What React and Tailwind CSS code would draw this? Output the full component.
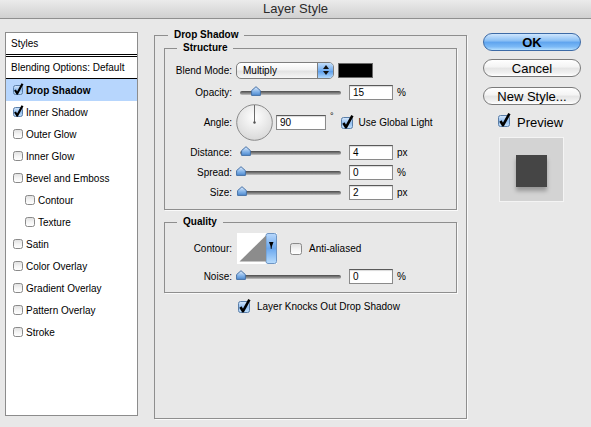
import React from "react";

// shared svg gradients for the aqua widgets
function Defs() {
  return (
    <svg width="0" height="0" className="absolute">
      <defs>
        <linearGradient id="cbOff" x1="0" y1="0" x2="0" y2="1">
          <stop offset="0" stopColor="#dedede" />
          <stop offset="0.5" stopColor="#f4f4f4" />
          <stop offset="1" stopColor="#ffffff" />
        </linearGradient>
        <linearGradient id="cbOn" x1="0" y1="0" x2="0" y2="1">
          <stop offset="0" stopColor="#d8e9fc" />
          <stop offset="0.5" stopColor="#93bff0" />
          <stop offset="1" stopColor="#c4e2fd" />
        </linearGradient>
        <linearGradient id="thumb" x1="0" y1="0" x2="0" y2="1">
          <stop offset="0" stopColor="#e3efff" />
          <stop offset="0.6" stopColor="#7fb0e6" />
          <stop offset="1" stopColor="#4f8ad0" />
        </linearGradient>
        <radialGradient id="dial" cx="0.5" cy="0.35" r="0.7">
          <stop offset="0" stopColor="#ffffff" />
          <stop offset="1" stopColor="#d6d6d6" />
        </radialGradient>
        <linearGradient id="strip" x1="0" y1="0" x2="0" y2="1">
          <stop offset="0" stopColor="#b9d8fb" />
          <stop offset="0.5" stopColor="#6aa7ee" />
          <stop offset="1" stopColor="#b8dcfd" />
        </linearGradient>
      </defs>
    </svg>
  );
}

function Check({ checked, size = 12 }) {
  const s = size;
  return (
    <svg width={s} height={s} className="shrink-0 overflow-visible">
      <rect
        x="0.5"
        y="0.5"
        width={s - 1}
        height={s - 1}
        rx="2"
        fill={checked ? "url(#cbOn)" : "url(#cbOff)"}
        stroke={checked ? "#5a7ea8" : "#8a8a8a"}
      />
      {checked && (
        <path
          d={`M${s * 0.2} ${s * 0.5} L${s * 0.42} ${s * 0.85} L${s * 0.95} ${-s * 0.12}`}
          stroke="#000"
          strokeWidth={s > 11 ? 2.6 : 2.2}
          fill="none"
          strokeLinejoin="round"
        />
      )}
    </svg>
  );
}

function Slider({ thumb }) {
  return (
    <div className="relative w-[105px] h-[11px] flex items-center shrink-0">
      <div className="ml-[4px] w-[101px] h-[4px] rounded-full bg-[linear-gradient(to_bottom,#4a4a4a,#8a8a8a_60%,#c4c4c4)]" />
      <svg width="10" height="10" className={`absolute top-[-1px] ${thumb}`}>
        <path d="M5 0.7 L9.4 4.6 L9.4 9.4 L0.6 9.4 L0.6 4.6 Z" fill="url(#thumb)" stroke="#4671a6" strokeLinejoin="round" />
      </svg>
    </div>
  );
}

function Field({ value, w = "w-[44px]" }) {
  return (
    <div className={`${w} h-[15px] shrink-0 bg-white border border-[#8a8a8a] border-t-[#5a5a5a] shadow-[inset_0_1px_1px_rgba(0,0,0,0.15)] pl-[3px] text-[10px] leading-[13px]`}>
      {value}
    </div>
  );
}

function Label({ children }) {
  return <div className="w-[67px] shrink-0 text-right mr-[4px]">{children}</div>;
}

function Legend({ children, className }) {
  return (
    <div className={`absolute top-[-7px] px-[6px] bg-[#e8e8e8] font-bold leading-[12px] ${className}`}>
      {children}
    </div>
  );
}

function SliderRow({ label, thumb, value, unit, className = "" }) {
  return (
    <div className={`flex items-center h-[15px] ${className}`}>
      <Label>{label}</Label>
      <Slider thumb={thumb} />
      <div className="ml-[8px]">
        <Field value={value} />
      </div>
      <div className="ml-[4px]">{unit}</div>
    </div>
  );
}

function AquaButton({ children, blue, className = "" }) {
  return (
    <div
      className={`w-[98px] h-[18px] rounded-full flex items-center justify-center text-[13px] leading-none ${
        blue
          ? "font-bold border border-[#3c6aa6] bg-[linear-gradient(to_bottom,#cfe6fd,#86bdf4_45%,#5ea3ee_50%,#7cbaf6_80%,#b6e0ff)]"
          : "border border-[#7b7b7b] bg-[linear-gradient(to_bottom,#ffffff,#f3f3f3_45%,#e4e4e4_50%,#f0f0f0_80%,#ffffff)]"
      } ${className}`}
    >
      {children}
    </div>
  );
}

const items = [
  { label: "Drop Shadow", checked: true, active: true },
  { label: "Inner Shadow", checked: true },
  { label: "Outer Glow" },
  { label: "Inner Glow" },
  { label: "Bevel and Emboss" },
  { label: "Contour", indent: true },
  { label: "Texture", indent: true },
  { label: "Satin" },
  { label: "Color Overlay" },
  { label: "Gradient Overlay" },
  { label: "Pattern Overlay" },
  { label: "Stroke" },
];

export default function App() {
  return (
    <div className="w-[591px] h-[427px] overflow-hidden bg-[#e8e8e8] text-[10px] text-black font-['Liberation_Sans',Arial,sans-serif]">
      <Defs />
      {/* title bar */}
      <div className="h-[19px] border-b border-[#8f8f8f] bg-[linear-gradient(to_bottom,#ebebeb,#d0d0d0)] flex items-center justify-center text-[13px] text-[#2b2b2b]">
        Layer Style
      </div>

      <div className="flex items-start pl-[5px] pt-[13px]">
        {/* styles list */}
        <div className="w-[133px] h-[384px] shrink-0 bg-white border border-[#8c8c8c]">
          <div className="h-[21px] flex items-center pl-[5px]">Styles</div>
          <div className="h-[1px] bg-black" />
          <div className="h-[1px]" />
          <div className="h-[1px] bg-black" />
          <div className="h-[21px] flex items-center pl-[5px]">Blending Options: Default</div>
          <div className="h-[1px] bg-black" />
          {items.map((it) => (
            <div
              key={it.label}
              className={`h-[22px] flex items-center gap-[3px] ${it.indent ? "pl-[19px]" : "pl-[7px]"} ${
                it.active ? "bg-[#b7d6fd] font-bold" : ""
              }`}
            >
              <Check checked={it.checked} size={10} />
              <span>{it.label}</span>
            </div>
          ))}
        </div>

        {/* Drop Shadow group */}
        <div className="relative ml-[16px] mt-[3px] w-[313px] h-[384px] shrink-0 border border-[#8e8e8e] shadow-[1px_1px_0_#fafafa] pl-[9px] pt-[12px]">
          <Legend className="left-[13px]">Drop Shadow</Legend>

          {/* Structure */}
          <div className="relative w-[293px] h-[162px] border border-[#8e8e8e] shadow-[1px_1px_0_#fafafa] pt-[13px]">
            <Legend className="left-[12px]">Structure</Legend>

            <div className="flex items-center h-[16px]">
              <Label>Blend Mode:</Label>
              <div className="w-[98px] h-[17px] shrink-0 flex rounded-[5px] border border-[#7e7e7e] overflow-hidden bg-[linear-gradient(to_bottom,#ffffff,#f2f2f2_45%,#e3e3e3_55%,#f6f6f6)]">
                <div className="flex-1 pl-[6px] leading-[15px]">Multiply</div>
                <div className="w-[16px] border-l border-[#7e7e7e] bg-[linear-gradient(to_bottom,#c2defb,#74aef0_50%,#5d9eea_55%,#b1d9fd)] flex flex-col items-center justify-center gap-[2px]">
                  <svg width="6" height="4"><path d="M3 0 L6 4 L0 4 Z" fill="#111" /></svg>
                  <svg width="6" height="4"><path d="M0 0 L6 0 L3 4 Z" fill="#111" /></svg>
                </div>
              </div>
              <div className="ml-[4px] w-[35px] h-[15px] bg-black border border-[#6a6a6a]" />
            </div>

            <SliderRow label="Opacity:" thumb="left-[15px]" value="15" unit="%" className="mt-[7px]" />

            <div className="flex items-center h-[37px] mt-[4px]">
              <Label>Angle:</Label>
              <svg width="37" height="37" className="shrink-0">
                <circle cx="18.5" cy="18.5" r="17.8" fill="url(#dial)" stroke="#8a8a8a" />
                <line x1="18.5" y1="18.5" x2="18.5" y2="1" stroke="#6a6a6a" strokeWidth="1" />
                <circle cx="18.5" cy="18.5" r="1.2" fill="#555" />
              </svg>
              <div className="ml-[3px]">
                <Field value="90" w="w-[50px]" />
              </div>
              <div className="ml-[4px] self-start mt-[8px] text-[9px] leading-none">°</div>
              <div className="ml-[7px]">
                <Check checked size={12} />
              </div>
              <div className="ml-[6px]">Use Global Light</div>
            </div>

            <SliderRow label="Distance:" thumb="left-[5px]" value="4" unit="px" className="mt-[4px]" />
            <SliderRow label="Spread:" thumb="left-[0px]" value="0" unit="%" className="mt-[5px]" />
            <SliderRow label="Size:" thumb="left-[1px]" value="2" unit="px" className="mt-[5px]" />
          </div>

          {/* Quality */}
          <div className="relative mt-[12px] w-[293px] h-[71px] border border-[#8e8e8e] shadow-[1px_1px_0_#fafafa] pt-[10px]">
            <Legend className="left-[12px]">Quality</Legend>

            <div className="flex items-center h-[31px]">
              <Label>Contour:</Label>
              <svg width="40" height="31" className="shrink-0 ml-[1px]">
                <rect x="0" y="0" width="40" height="31" fill="#fff" />
                <rect x="29" y="0.5" width="10.5" height="30" rx="2" fill="url(#strip)" stroke="#6d95c4" />
                <path d="M2.5 28.5 L29 2.5 L29 28.5 Z" fill="#8c8c8c" />
                <path d="M32 9 L36.5 9 L35 13 L34.5 16 L33.8 16 L33.5 13 Z" fill="#000" />
              </svg>
              <div className="ml-[13px]">
                <Check size={12} />
              </div>
              <div className="ml-[7px]">Anti-aliased</div>
            </div>

            <SliderRow label="Noise:" thumb="left-[0px]" value="0" unit="%" className="mt-[5px]" />
          </div>

          <div className="mt-[7px] ml-[74px] flex items-center h-[13px]">
            <Check checked size={12} />
            <div className="ml-[7px]">Layer Knocks Out Drop Shadow</div>
          </div>
        </div>

        {/* buttons */}
        <div className="ml-[16px] mt-[1px] flex flex-col">
          <AquaButton blue>OK</AquaButton>
          <AquaButton className="mt-[8px]">Cancel</AquaButton>
          <AquaButton className="mt-[10px]">New Style...</AquaButton>
          <div className="mt-[9px] ml-[15px] flex items-center h-[14px]">
            <Check checked size={12} />
            <div className="ml-[7px] text-[13px] leading-none mt-[3px]">Preview</div>
          </div>
          <div className="mt-[9px] ml-[16px] w-[65px] h-[65px] bg-[#d3d3d3] border border-[#f4f4f4] pt-[17px] pl-[16px]">
            <div className="w-[31px] h-[32px] bg-[#454545] shadow-[0_4px_4px_rgba(0,0,0,0.28)]" />
          </div>
        </div>
      </div>
    </div>
  );
}
